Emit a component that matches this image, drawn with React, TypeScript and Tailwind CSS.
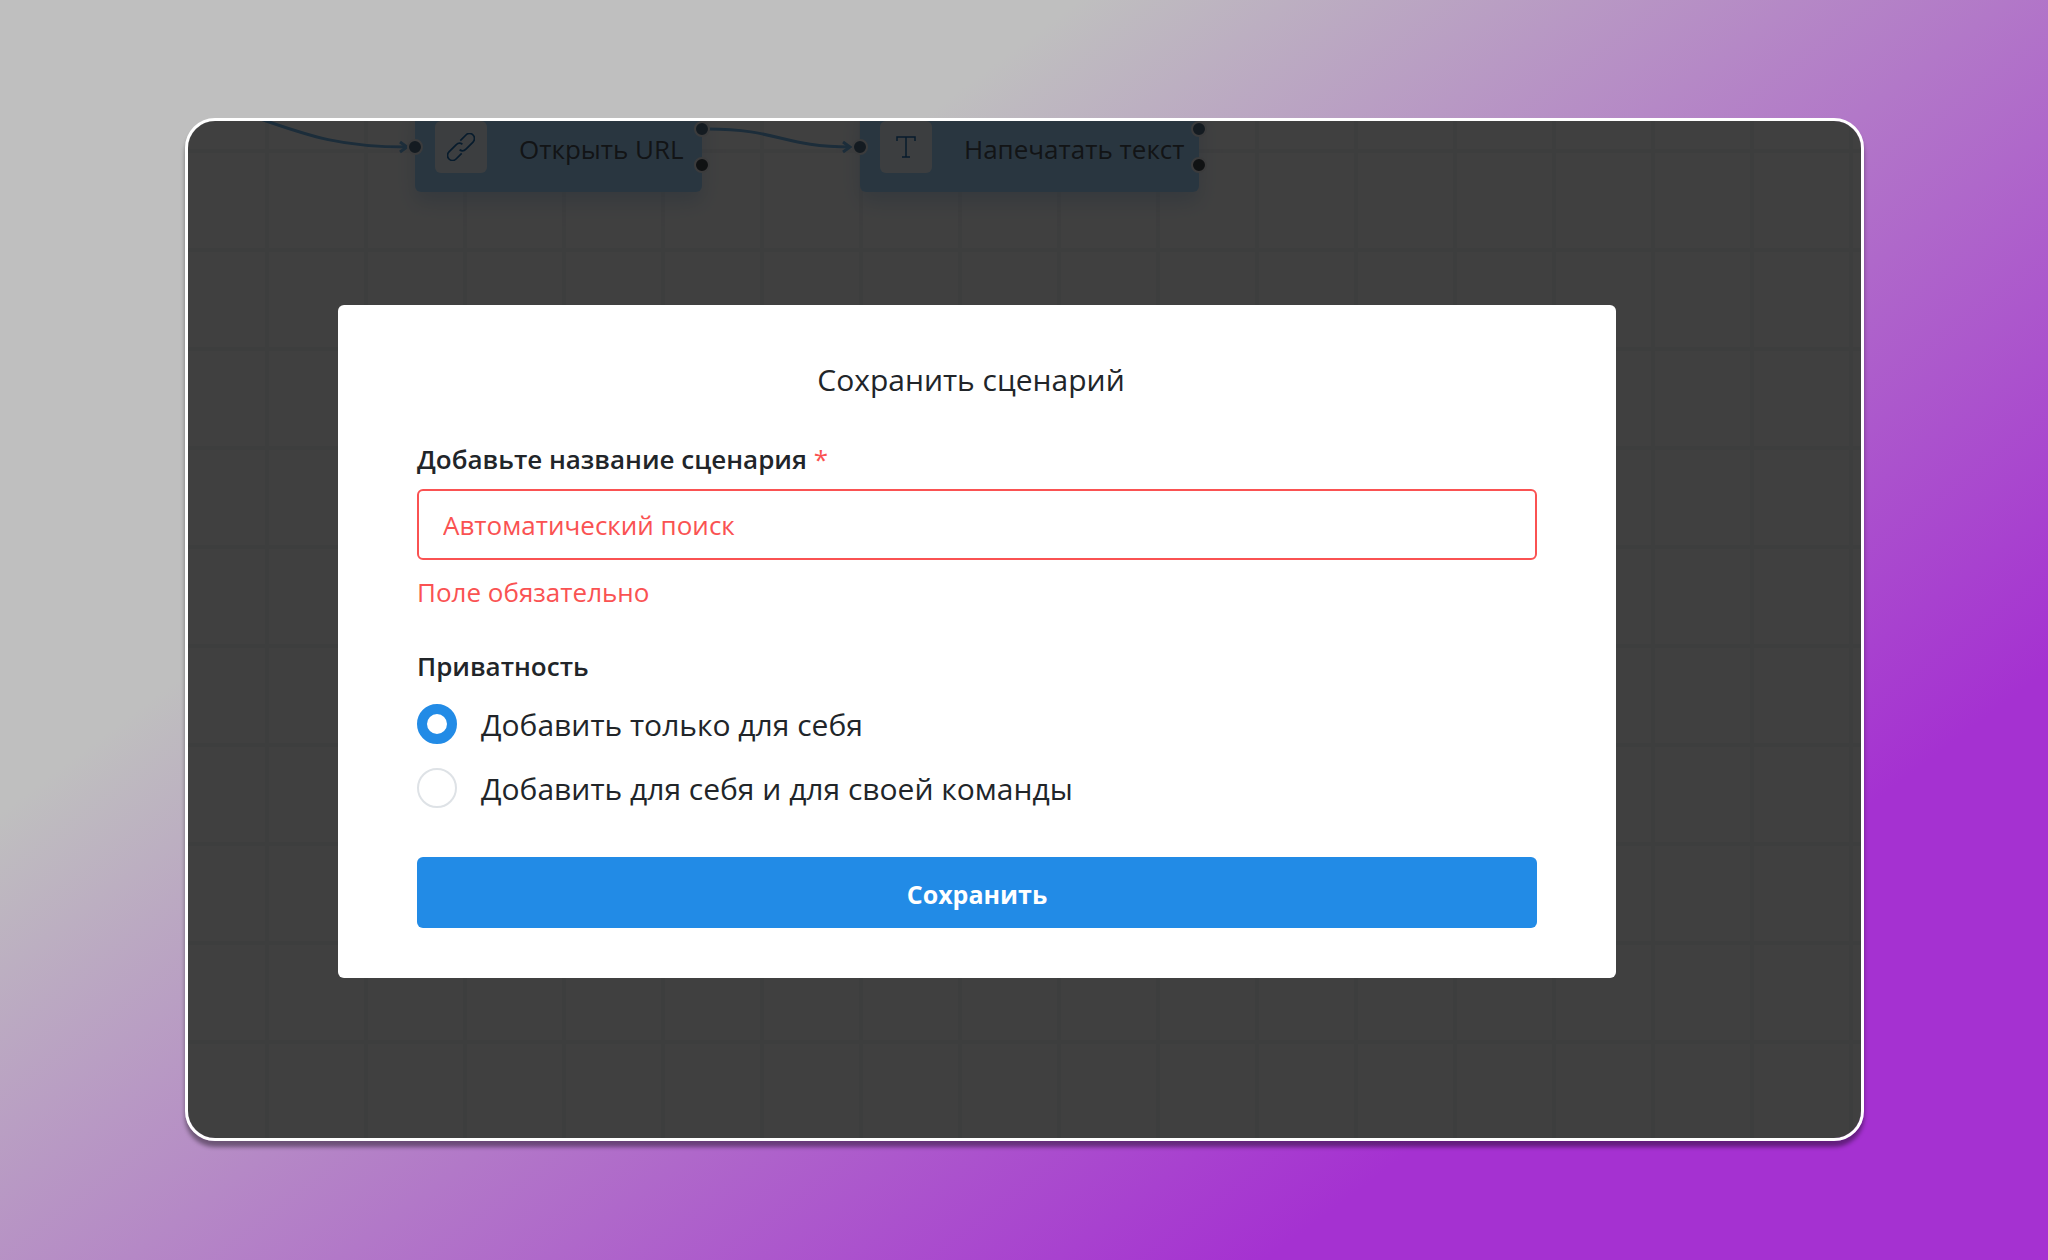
'use client';

import { useState } from 'react';

const nodes = [
  { id: 'open-url', label: 'Открыть URL', position: 'left-[227px] w-[287px]', icon: <LinkIcon /> },
  { id: 'type-text', label: 'Напечатать текст', position: 'left-[672px] w-[339px]', icon: <TextIcon /> },
];

const privacyOptions = [
  { value: 'private', label: 'Добавить только для себя' },
  { value: 'team', label: 'Добавить для себя и для своей команды' },
];

function LinkIcon() {
  return (
    <svg viewBox="0 0 28 28" className="size-7 text-[#1c6bb0]" fill="none" stroke="currentColor" strokeWidth="1.7">
      <g transform="rotate(-45 14 14)">
        <path d="M10 19H2a5 5 0 0 1 0-10h10a5 5 0 0 1 5 4" />
        <path d="M18 9h8a5 5 0 0 1 0 10H16a5 5 0 0 1-5-4" />
      </g>
    </svg>
  );
}

function TextIcon() {
  return (
    <svg viewBox="0 0 24 24" className="size-6 text-[#1c6bb0]" fill="none" stroke="currentColor" strokeWidth="1.5">
      <path d="M3 6V2h18v4M12 2v20M8 22h8" />
    </svg>
  );
}

function Handle({ className }: { className: string }) {
  return <span className={`absolute size-4 rounded-full border-2 border-[#e9ecef] ${className}`} />;
}

function FlowCanvas() {
  return (
    <div className="absolute inset-0 bg-white bg-[linear-gradient(to_right,#f4f5f6_4px,transparent_4px),linear-gradient(to_bottom,#f4f5f6_4px,transparent_4px)] bg-[size:99px_99px] bg-[position:77px_28px]">
      <svg className="absolute top-0 left-0 h-24 w-full" fill="none" stroke="#6fb2e6" strokeWidth="3" aria-hidden="true">
        <path d="M52 -9C112 11 142 26 219 26" />
        <path d="M520 8C590 8 596 26 662 26" />
        <path d="M212 21l7 5-7 5M655 21l7 5-7 5" />
      </svg>
      {nodes.map((node) => (
        <div
          key={node.id}
          className={`absolute -top-[19px] flex h-[90px] items-center gap-8 rounded-md bg-[#a5d8ff] pl-5 shadow-[0_10px_20px_#a5c8e880] ${node.position}`}
        >
          <div className="flex size-[52px] shrink-0 items-center justify-center rounded-md bg-[#edf6fd]">{node.icon}</div>
          <span className="pt-1 text-[26px] whitespace-nowrap text-[#495057]">{node.label}</span>
          <Handle className="top-[37px] -left-2 bg-[#4f6c84]" />
          <Handle className="top-[19px] -right-2 bg-[#4f6c84]" />
          <Handle className="top-[55px] -right-2 bg-[#40474d]" />
        </div>
      ))}
    </div>
  );
}

function SaveScenarioForm() {
  const [name, setName] = useState('');
  const [privacy, setPrivacy] = useState('private');

  return (
    <form
      className="relative flex w-full flex-col rounded-md bg-white px-[79px] pt-[50px] pb-[50px] text-[#212529]"
      onSubmit={(e) => e.preventDefault()}
    >
      <h2 className="mb-[34px] pr-3 text-center text-[30px] leading-[50px]">Сохранить сценарий</h2>

      <label htmlFor="scenario-name" className="mb-2.5 text-[26px] leading-10 font-semibold">
        Добавьте название сценария <span className="font-normal text-[#fa5252]">*</span>
      </label>
      <input
        id="scenario-name"
        type="text"
        value={name}
        onChange={(e) => setName(e.target.value)}
        placeholder="Автоматический поиск"
        aria-invalid="true"
        aria-describedby="scenario-name-error"
        className="h-[71px] w-full rounded-md border-2 border-[#fa5252] px-6 text-[26px] outline-none placeholder:text-[#fa5252]"
      />
      <p id="scenario-name-error" className="mt-3 text-[26px] leading-10 text-[#fa5252]">
        Поле обязательно
      </p>

      <fieldset className="mt-[34px]">
        <legend className="mb-[18px] text-[26px] leading-10 font-semibold">Приватность</legend>
        <div className="flex flex-col gap-6">
          {privacyOptions.map((option) => (
            <label key={option.value} className="flex h-10 items-center gap-6 text-[30px]">
              <input
                type="radio"
                name="privacy"
                value={option.value}
                checked={privacy === option.value}
                onChange={() => setPrivacy(option.value)}
                className="size-10 shrink-0 appearance-none rounded-full border-2 border-[#dee2e6] bg-white checked:border-10 checked:border-[#228be6]"
              />
              {option.label}
            </label>
          ))}
        </div>
      </fieldset>

      <button type="submit" className="mt-[49px] h-[71px] w-full rounded-md bg-[#228be6] pt-1 text-[25px] font-bold text-white">
        Сохранить
      </button>
    </form>
  );
}

export default function App() {
  return (
    <div className="flex min-h-screen bg-[linear-gradient(143deg,#bfbfbf_29%,#a531d1_79%)] pt-[118px] pr-[184px] pb-[119px] pl-[185px] font-['Open_Sans','Noto_Sans',sans-serif]">
      <main className="relative flex flex-1 items-start overflow-hidden rounded-[30px] border-[3px] border-white pt-[184px] pr-[245px] pl-[150px] shadow-[0_6px_4px_#00000066]">
        <FlowCanvas />
        <div className="absolute inset-0 bg-black/75" />
        <SaveScenarioForm />
      </main>
    </div>
  );
}
